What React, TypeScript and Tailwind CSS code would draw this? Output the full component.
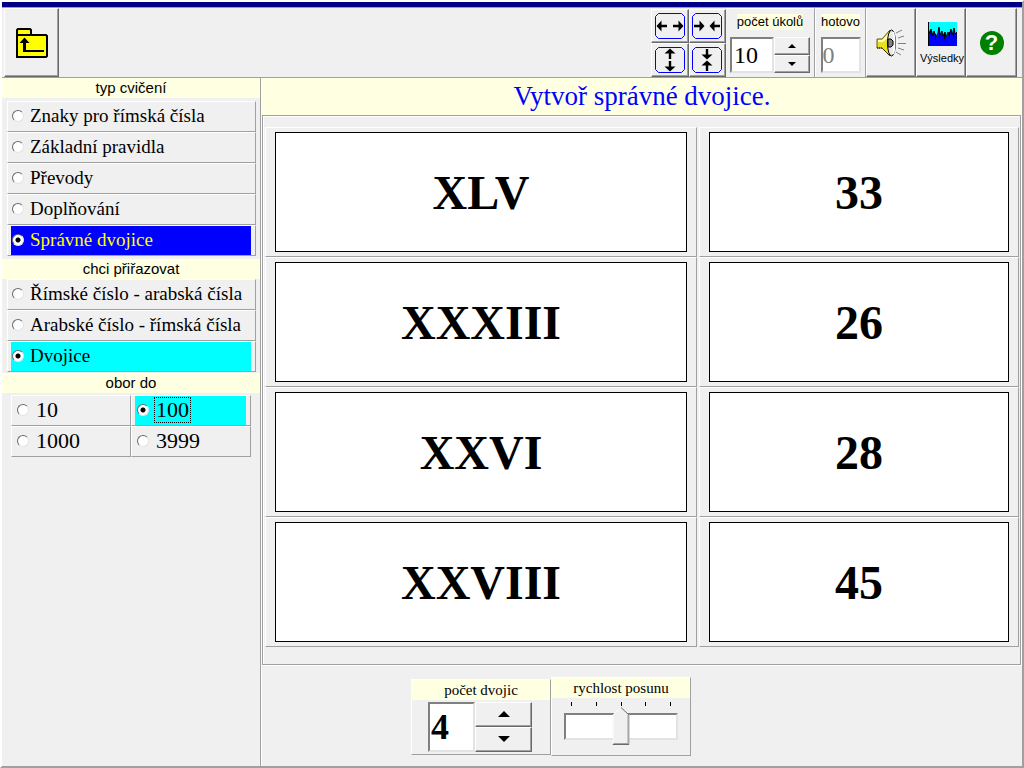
import { useState, type ReactNode } from 'react';

const SERIF = "font-['Liberation_Serif',serif]";
const RAISED = 'border border-t-white border-l-white border-r-[#696969] border-b-[#696969] shadow-[inset_-1px_-1px_0_#a0a0a0]';
const SUNKEN = 'border-2 border-t-[#808080] border-l-[#808080] border-r-[#e3e3e3] border-b-[#e3e3e3] bg-white';

const exercises = ['Znaky pro římská čísla', 'Základní pravidla', 'Převody', 'Doplňování', 'Správné dvojice'];
const directions = ['Římské číslo - arabská čísla', 'Arabské číslo - římská čísla', 'Dvojice'];
const ranges = ['10', '100', '1000', '3999'];

const pairs = [
  { roman: 'XLV', arabic: '33' },
  { roman: 'XXXIII', arabic: '26' },
  { roman: 'XXVI', arabic: '28' },
  { roman: 'XXVIII', arabic: '45' },
];

type ArrowProps = { x: number; y: number; angle: number };

function Arrow({ x, y, angle }: ArrowProps) {
  return <path d="M-5.5 0L-0.5-5.5V-1.2H5V1.2H-0.5V5.5Z" transform={`translate(${x} ${y}) rotate(${angle})`} />;
}

function ArrowButton({ label, arrows }: { label: string; arrows: ArrowProps[] }) {
  return (
    <button aria-label={label} className={`flex items-center justify-center ${RAISED}`}>
      <svg width="30" height="26" viewBox="0 0 30 26">
        <path d="M3.5 0.5H26.5L29.5 3.5V22.5L26.5 25.5H3.5L0.5 22.5V3.5Z" fill="none" stroke="#0000ff" />
        {arrows.map((a, i) => (
          <Arrow key={i} {...a} />
        ))}
      </svg>
    </button>
  );
}

function FolderIcon() {
  return (
    <svg width="32" height="30" viewBox="0 0 32 30">
      <path d="M1 29V2L2 1H14L15 2V7H30L31 8V28L30 29Z" fill="#ffff00" stroke="#000" strokeWidth="2" />
      <path d="M1 7H16" stroke="#000" strokeWidth="2" />
      <path d="M8.5 9.5L13.5 15H10V22H28V24H7V15H3.5Z" />
    </svg>
  );
}

function SpeakerIcon() {
  return (
    <svg width="32" height="28" viewBox="0 0 32 28">
      <path d="M1 10H6L14 1V27L6 19H1Z" fill="#e8e020" stroke="#606000" />
      <path d="M2 11H6L13 4V8L7 13H2Z" fill="#ffffc0" />
      <path d="M1 19H6L14 27" fill="none" stroke="#000" strokeDasharray="1 1" />
      <ellipse cx="15.5" cy="14" rx="4" ry="13" fill="#e8e8e8" stroke="#000" />
      <path d="M17 3C19 8 19 20 17 25" fill="none" stroke="#fff" strokeWidth="2" />
      <path d="M12 10H15L17 12V16L15 18H12Z" fill="#808080" stroke="#000" />
      <path d="M20 4L26 1M22 9L28 7M22 14.5H30M22 19L28 21M20 23L25 26" stroke="#808080" fill="none" />
    </svg>
  );
}

function ResultsIcon() {
  return (
    <svg width="29" height="24" viewBox="0 0 29 24">
      <path d="M0 0H29V24H0Z" fill="#00ffff" />
      <path
        d="M0 24V6L2 12L3 7L5 14L6 9L8 15L10 11L11 5L12 13L14 9L15 14L17 10L18 15L20 10L21 14L23 7L24 13L26 6L27 12L29 10V24Z"
        fill="#0000ff"
        stroke="#000"
      />
      <path d="M1 17H29V24H1Z" fill="#0000ff" />
      <path d="M0.5 0V24M3.5 10V17M7.5 12V18M11.5 8V16M16.5 12V17M21.5 10V16M25.5 11V17" stroke="#000" />
    </svg>
  );
}

function Triangle({ down, size }: { down?: boolean; size: number }) {
  return (
    <svg width={size * 2} height={size} viewBox="0 0 12 6">
      <path d={down ? 'M0 0H12L6 6Z' : 'M0 6H12L6 0Z'} />
    </svg>
  );
}

function Spinner({ size, onStep }: { size: number; onStep: (delta: number) => void }) {
  return (
    <div className="flex flex-1 flex-col">
      <button aria-label="více" onClick={() => onStep(1)} className={`flex flex-1 items-center justify-center ${RAISED}`}>
        <Triangle size={size} />
      </button>
      <button aria-label="méně" onClick={() => onStep(-1)} className={`flex flex-1 items-center justify-center ${RAISED}`}>
        <Triangle size={size} down />
      </button>
    </div>
  );
}

function ToolButton({ label, className, children }: { label: string; className: string; children: ReactNode }) {
  return (
    <button aria-label={label} className={`flex flex-col items-center justify-center ${RAISED} ${className}`}>
      {children}
    </button>
  );
}

function SectionTitle({ children }: { children: ReactNode }) {
  return <h2 className="h-5 bg-[#ffffe1] text-center text-[15px] leading-5">{children}</h2>;
}

type RadioProps = {
  name: string;
  label: string;
  checked: boolean;
  onChange: () => void;
  selectedClass: string;
  large?: boolean;
};

function RadioRow({ name, label, checked, onChange, selectedClass, large }: RadioProps) {
  return (
    <div className="h-[31px] border border-t-white border-l-white border-r-[#a0a0a0] border-b-[#a0a0a0] pr-1 pl-[3px]">
      <label
        className={`flex h-full items-center pb-0.5 ${SERIF} ${large ? 'gap-1.5 pl-0.5 text-[22px]' : 'gap-[5px] pl-px text-[19px]'} ${checked ? selectedClass : ''}`}
      >
        <input
          type="radio"
          name={name}
          checked={checked}
          onChange={onChange}
          className="size-3 shrink-0 appearance-none rounded-full border border-t-[#696969] border-l-[#696969] border-r-[#e3e3e3] border-b-[#e3e3e3] bg-white outline-none checked:bg-[radial-gradient(circle,#000_2px,#fff_3px)]"
        />
        <span className={large && checked ? 'px-px leading-6 outline outline-dotted outline-black' : 'px-px leading-6'}>{label}</span>
      </label>
    </div>
  );
}

export default function App() {
  const [exercise, setExercise] = useState('Správné dvojice');
  const [direction, setDirection] = useState('Dvojice');
  const [range, setRange] = useState('100');
  const [tasks, setTasks] = useState(10);
  const [pairCount, setPairCount] = useState(4);
  const [speed, setSpeed] = useState(2);

  return (
    <div className="flex min-h-screen flex-col border-2 border-t-white border-l-white border-r-[#a0a0a0] border-b-[#a0a0a0] bg-[#f0f0f0] font-['Liberation_Sans',sans-serif] text-black">
      <div className="h-[5px] bg-[#000084]" />

      <header className="flex h-[71px] border-y border-[#a0a0a0] pr-[5px] pl-0.5">
        <ToolButton label="Zpět" className="w-[55px]">
          <FolderIcon />
        </ToolButton>

        <div className="ml-auto grid w-[75px] grid-cols-2 grid-rows-2 pt-px">
          <ArrowButton label="Rozšířit" arrows={[{ x: 7, y: 13, angle: 0 }, { x: 23, y: 13, angle: 180 }]} />
          <ArrowButton label="Zúžit" arrows={[{ x: 7, y: 13, angle: 180 }, { x: 23, y: 13, angle: 0 }]} />
          <ArrowButton label="Zvýšit" arrows={[{ x: 15, y: 7, angle: 90 }, { x: 15, y: 19, angle: 270 }]} />
          <ArrowButton label="Snížit" arrows={[{ x: 15, y: 7, angle: 270 }, { x: 15, y: 19, angle: 90 }]} />
        </div>

        <div className="flex w-[89px] flex-col items-center justify-between border-t border-r border-t-white border-r-[#a0a0a0] px-1 pt-[5px] pb-1">
          <label htmlFor="tasks" className="bg-[#ffffe1] text-[13px] leading-4">
            počet úkolů
          </label>
          <div className="flex h-9 w-full">
            <input
              id="tasks"
              value={tasks}
              onChange={(e) => setTasks(Number(e.target.value) || 0)}
              className={`w-11 px-0.5 text-2xl ${SERIF} ${SUNKEN}`}
            />
            <Spinner size={4} onStep={(d) => setTasks(Math.max(1, tasks + d))} />
          </div>
        </div>

        <div className="flex w-[51px] flex-col items-center justify-between border-t border-r border-l border-t-white border-r-[#a0a0a0] border-l-white px-1 pt-[5px] pb-1">
          <label htmlFor="done" className="bg-[#ffffe1] text-[13px] leading-4">
            hotovo
          </label>
          <input id="done" readOnly value="0" className={`h-9 w-10 text-2xl text-[#808080] ${SERIF} ${SUNKEN}`} />
        </div>

        <ToolButton label="Zvuk" className="w-[50px] pl-0.5">
          <SpeakerIcon />
        </ToolButton>
        <ToolButton label="Výsledky" className="w-[50px] gap-1 pt-0.5 pl-0.5">
          <ResultsIcon />
          <span className="text-[11px] leading-4">Výsledky</span>
        </ToolButton>
        <ToolButton label="Nápověda" className="w-[51px]">
          <span className="size-6 rounded-full bg-[#008000] text-[22px] leading-6 font-bold text-white">?</span>
        </ToolButton>
      </header>

      <div className="flex flex-1">
        <aside className="w-[259px] shrink-0 border-r border-[#a0a0a0]">
          <SectionTitle>typ cvičení</SectionTitle>
          <div className="my-[3px] mr-1 ml-[5px]">
            {exercises.map((item) => (
              <RadioRow
                key={item}
                name="exercise"
                label={item}
                checked={item === exercise}
                onChange={() => setExercise(item)}
                selectedClass="bg-[#0000ff] text-[#ffff00]"
              />
            ))}
          </div>

          <SectionTitle>chci přiřazovat</SectionTitle>
          <div className="mr-1 mb-px ml-[5px]">
            {directions.map((item) => (
              <RadioRow
                key={item}
                name="direction"
                label={item}
                checked={item === direction}
                onChange={() => setDirection(item)}
                selectedClass="bg-[#00ffff]"
              />
            ))}
          </div>

          <SectionTitle>obor do</SectionTitle>
          <div className="mx-[9px] mt-0.5 grid grid-cols-2">
            {ranges.map((item) => (
              <RadioRow
                key={item}
                name="range"
                label={item}
                checked={item === range}
                onChange={() => setRange(item)}
                selectedClass="bg-[#00ffff]"
                large
              />
            ))}
          </div>
        </aside>

        <main className="flex flex-1 flex-col border-l border-white">
          <h1 className={`h-[37px] bg-[#ffffe1] text-center text-[27px] leading-9 text-[#0000ff] ${SERIF}`}>
            Vytvoř správné dvojice.
          </h1>

          <section className="mr-px flex-1 border border-[#a0a0a0] pt-[11px] pr-px pl-0.5 shadow-[1px_1px_0_#fff,inset_1px_1px_0_#fff]">
            {pairs.map((pair) => (
              <div key={pair.roman} className={`grid grid-cols-[27fr_20fr] gap-0.5 text-5xl font-bold ${SERIF}`}>
                {[pair.roman, pair.arabic].map((value) => (
                  <div
                    key={value}
                    className="border border-t-white border-l-white border-r-[#a0a0a0] border-b-[#a0a0a0] px-[9px] py-1"
                  >
                    <button className="h-30 w-full border border-black bg-white pt-0.5">{value}</button>
                  </div>
                ))}
              </div>
            ))}
          </section>

          <footer className={`flex items-center pt-3 pb-2.5 pl-[149px] text-[15px] ${SERIF}`}>
            <div className="w-[140px] border border-t-white border-l-white border-r-[#a0a0a0] border-b-[#a0a0a0] pb-0.5">
              <label htmlFor="pairs" className="block bg-[#ffffe1] text-center leading-5">
                počet dvojic
              </label>
              <div className="mr-[18px] ml-4 flex h-[52px] pt-0.5">
                <input
                  id="pairs"
                  value={pairCount}
                  onChange={(e) => setPairCount(Number(e.target.value) || 0)}
                  className={`w-[47px] px-px text-4xl font-bold ${SUNKEN}`}
                />
                <Spinner size={6} onStep={(d) => setPairCount(Math.max(2, pairCount + d))} />
              </div>
            </div>

            <div className="h-[79px] w-[140px] border border-t-white border-l-white border-r-[#a0a0a0] border-b-[#a0a0a0]">
              <label htmlFor="speed" className="block bg-[#ffffe1] text-center leading-5">
                rychlost posunu
              </label>
              <div className="mx-3 pt-1">
                <div className="flex justify-between px-[7px]">
                  {[0, 1, 2, 3, 4].map((tick) => (
                    <span key={tick} className="h-1 w-px bg-black" />
                  ))}
                </div>
                <div className="relative mt-[7px]">
                  <input
                    id="speed"
                    type="range"
                    min={0}
                    max={4}
                    value={speed}
                    onChange={(e) => setSpeed(Number(e.target.value))}
                    className={`block h-[27px] w-full appearance-none [&::-webkit-slider-thumb]:opacity-0 ${SUNKEN}`}
                  />
                  <svg
                    width="17"
                    height="38"
                    viewBox="0 0 17 38"
                    className="pointer-events-none absolute -top-1.5 -translate-x-1/2"
                    style={{ left: `${7 + speed * 21.5}%` }}
                  >
                    <path d="M0 37V8L8 0L17 8V38H0Z" fill="#f0f0f0" />
                    <path d="M0.5 37V8L8.5 0.5" fill="none" stroke="#fff" />
                    <path d="M8.5 0.5L16.5 8V37.5H0" fill="none" stroke="#696969" />
                    <path d="M15.5 8V36.5H1" fill="none" stroke="#a0a0a0" />
                  </svg>
                </div>
              </div>
            </div>
          </footer>
        </main>
      </div>
    </div>
  );
}
